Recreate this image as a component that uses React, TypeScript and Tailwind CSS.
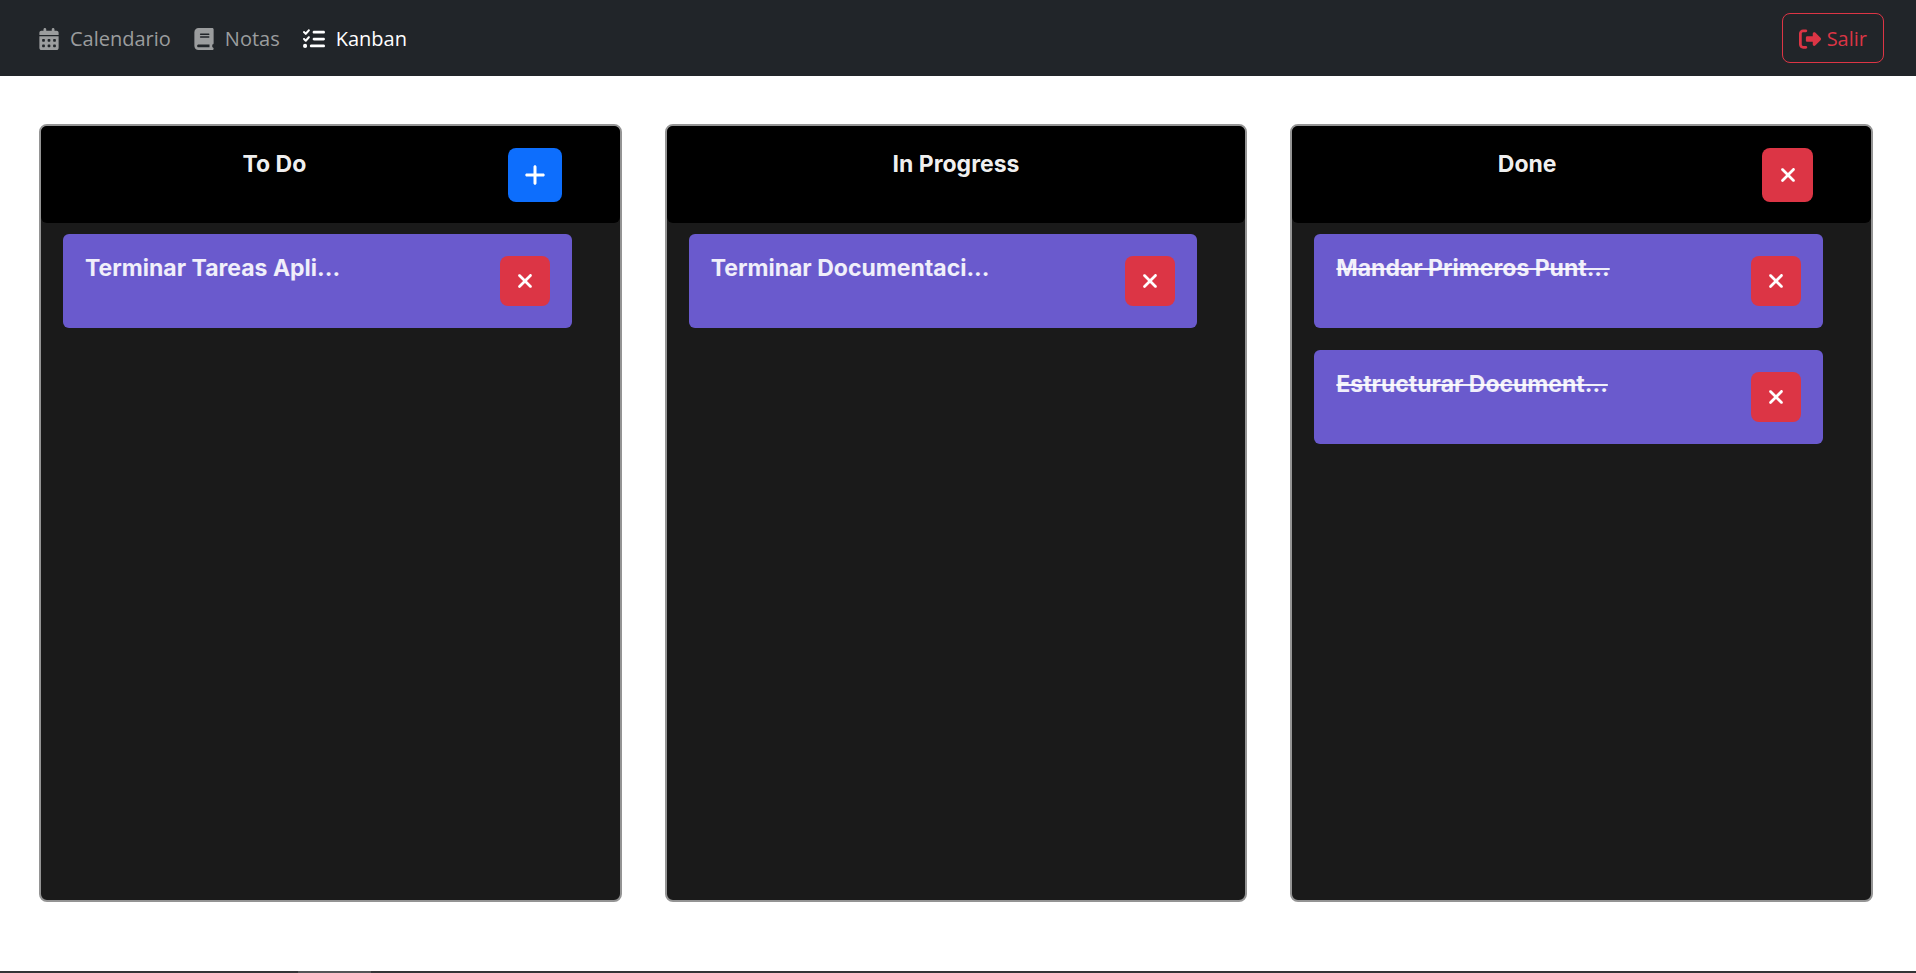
import type { ReactNode } from "react";
import {
  FaBook,
  FaCalendarDays,
  FaListCheck,
  FaPlus,
  FaRightFromBracket,
  FaXmark,
} from "react-icons/fa6";

type Column = { title: string; tasks: string[]; done?: boolean; action?: "add" | "clear" };

const columns: Column[] = [
  { title: "To Do", tasks: ["Terminar Tareas Apli..."], action: "add" },
  { title: "In Progress", tasks: ["Terminar Documentaci..."] },
  {
    title: "Done",
    tasks: ["Mandar Primeros Punt...", "Estructurar Document..."],
    done: true,
    action: "clear",
  },
];

function NavLink({ icon, label, active }: { icon: ReactNode; label: string; active?: boolean }) {
  return (
    <a
      href="#"
      aria-current={active ? "page" : undefined}
      className={`flex items-center gap-[11px] ${active ? "text-white" : "text-[#9b9d9e]"}`}
    >
      {icon}
      <span>{label}</span>
    </a>
  );
}

function TaskCard({ text, done }: { text: string; done?: boolean }) {
  return (
    <li className="flex items-start justify-between rounded-md bg-[#6a5acd] p-[22px]">
      <h3 className={`leading-6 text-white/90 ${done ? "line-through decoration-2" : ""}`}>{text}</h3>
      <button
        type="button"
        aria-label="Eliminar tarea"
        className="flex h-[50px] w-[50px] items-center justify-center rounded-lg bg-[#dc3545] text-white"
      >
        <FaXmark size={22} />
      </button>
    </li>
  );
}

function BoardColumn({ column }: { column: Column }) {
  return (
    <section className="min-h-[778px] flex-1 rounded-lg border-2 border-[#949494] bg-[#1a1a1a]">
      <header
        className={`flex h-[97px] items-start gap-[22px] rounded-md bg-black pt-[22px] pl-[22px] ${
          column.action ? "pr-[58px]" : "pr-[22px]"
        }`}
      >
        <h2 className="flex-1 text-center leading-8 text-white/95">{column.title}</h2>
        {column.action === "add" && (
          <button
            type="button"
            aria-label="Agregar tarea"
            className="flex h-[54px] w-[54px] items-center justify-center rounded-lg bg-[#0d6efd] text-white"
          >
            <FaPlus size={24} />
          </button>
        )}
        {column.action === "clear" && (
          <button
            type="button"
            aria-label="Eliminar tareas terminadas"
            className="flex h-[54px] w-[51px] items-center justify-center rounded-lg bg-[#dc3545] text-white"
          >
            <FaXmark size={22} />
          </button>
        )}
      </header>
      <ul className="flex flex-col gap-[22px] pt-[11px] pr-[48px] pl-[22px]">
        {column.tasks.map((task) => (
          <TaskCard key={task} text={task} done={column.done} />
        ))}
      </ul>
    </section>
  );
}

export default function App() {
  return (
    <div className="flex min-h-screen flex-col bg-white font-['Open_Sans',sans-serif]">
      <nav className="flex h-[76px] items-center justify-between bg-[#212529] pr-8 pl-[39px] text-xl">
        <div className="flex items-center gap-[23px] pt-[2px]">
          <NavLink icon={<FaCalendarDays size={22} className="w-5" />} label="Calendario" />
          <NavLink icon={<FaBook size={22} className="w-5" />} label="Notas" />
          <NavLink icon={<FaListCheck size={22} />} label="Kanban" active />
        </div>
        <button
          type="button"
          className="flex h-[50px] items-center gap-[6px] rounded-lg border border-[#dc3545] px-4 pt-[2px] text-[#dc3545]"
        >
          <FaRightFromBracket size={22} />
          Salir
        </button>
      </nav>
      <main className="flex flex-1 items-start gap-[43px] pt-12 pr-[43px] pb-[69px] pl-[39px] font-['Inter',sans-serif] text-[23px] font-bold">
        {columns.map((column) => (
          <BoardColumn key={column.title} column={column} />
        ))}
      </main>
      <footer className="flex h-[2px] bg-[#343537]">
        <div className="ml-[298px] w-[73px] bg-[#555658]" />
      </footer>
    </div>
  );
}
